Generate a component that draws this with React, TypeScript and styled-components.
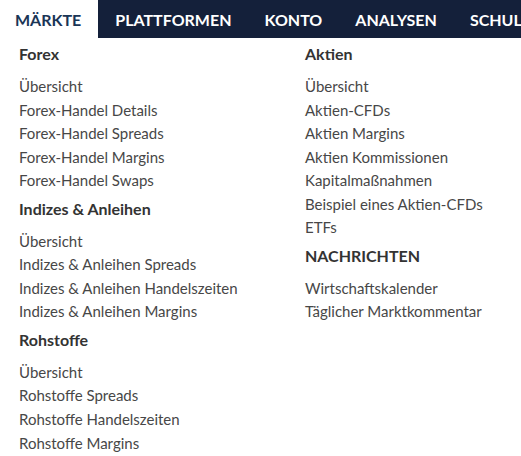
import React from "react";
import styled, { createGlobalStyle } from "styled-components";

const Global = createGlobalStyle`
  html, body { margin: 0; padding: 0; background: #ffffff; }
  body { font-family: Lato, "Open Sans", sans-serif; }
`;

const Page = styled.div`
  width: 521px;
  height: 456px;
  overflow: hidden;
  background: #ffffff;
`;

const NavBar = styled.nav`
  display: flex;
  height: 38px;
  background: #14203a;
  white-space: nowrap;
  overflow: hidden;
`;

const NavItem = styled.div<{ $active?: boolean }>`
  display: flex;
  flex-shrink: 0;
  align-items: center;
  padding: 0 ${(p) => (p.$active ? "17px 0 15px" : "16px 0 17px")};
  font-family: Lato, sans-serif;
  font-weight: 700;
  font-size: 16px;
  color: ${(p) => (p.$active ? "#1a3556" : "#ffffff")};
  background: ${(p) => (p.$active ? "#ffffff" : "transparent")};
`;

const Menu = styled.div`
  display: grid;
  grid-template-columns: 286px 1fr;
  padding: 4px 0 0 19px;
`;

const Column = styled.div`
  display: flex;
  flex-direction: column;
`;

const Heading = styled.div<{ $first?: boolean }>`
  font-weight: 700;
  font-size: 16px;
  line-height: 24px;
  color: #333333;
  margin-top: ${(p) => (p.$first ? "0" : "4px")};
  margin-bottom: 9px;
`;

const Link = styled.div`
  font-size: 15px;
  line-height: 23.55px;
  color: #474747;
`;

type Section = { title: string; items: string[] };

const left: Section[] = [
  {
    title: "Forex",
    items: [
      "Übersicht",
      "Forex-Handel Details",
      "Forex-Handel Spreads",
      "Forex-Handel Margins",
      "Forex-Handel Swaps",
    ],
  },
  {
    title: "Indizes & Anleihen",
    items: [
      "Übersicht",
      "Indizes & Anleihen Spreads",
      "Indizes & Anleihen Handelszeiten",
      "Indizes & Anleihen Margins",
    ],
  },
  {
    title: "Rohstoffe",
    items: [
      "Übersicht",
      "Rohstoffe Spreads",
      "Rohstoffe Handelszeiten",
      "Rohstoffe Margins",
    ],
  },
];

const right: Section[] = [
  {
    title: "Aktien",
    items: [
      "Übersicht",
      "Aktien-CFDs",
      "Aktien Margins",
      "Aktien Kommissionen",
      "Kapitalmaßnahmen",
      "Beispiel eines Aktien-CFDs",
      "ETFs",
    ],
  },
  {
    title: "NACHRICHTEN",
    items: ["Wirtschaftskalender", "Täglicher Marktkommentar"],
  },
];

const renderColumn = (sections: Section[]) => (
  <Column>
    {sections.map((s, i) => (
      <React.Fragment key={s.title}>
        <Heading $first={i === 0}>{s.title}</Heading>
        {s.items.map((it, j) => (
          <Link key={j}>{it}</Link>
        ))}
      </React.Fragment>
    ))}
  </Column>
);

export default function App() {
  return (
    <Page>
      <Global />
      <NavBar>
        <NavItem $active>MÄRKTE</NavItem>
        <NavItem>PLATTFORMEN</NavItem>
        <NavItem>KONTO</NavItem>
        <NavItem>ANALYSEN</NavItem>
        <NavItem>SCHULUNGEN</NavItem>
      </NavBar>
      <Menu>
        {renderColumn(left)}
        {renderColumn(right)}
      </Menu>
    </Page>
  );
}
